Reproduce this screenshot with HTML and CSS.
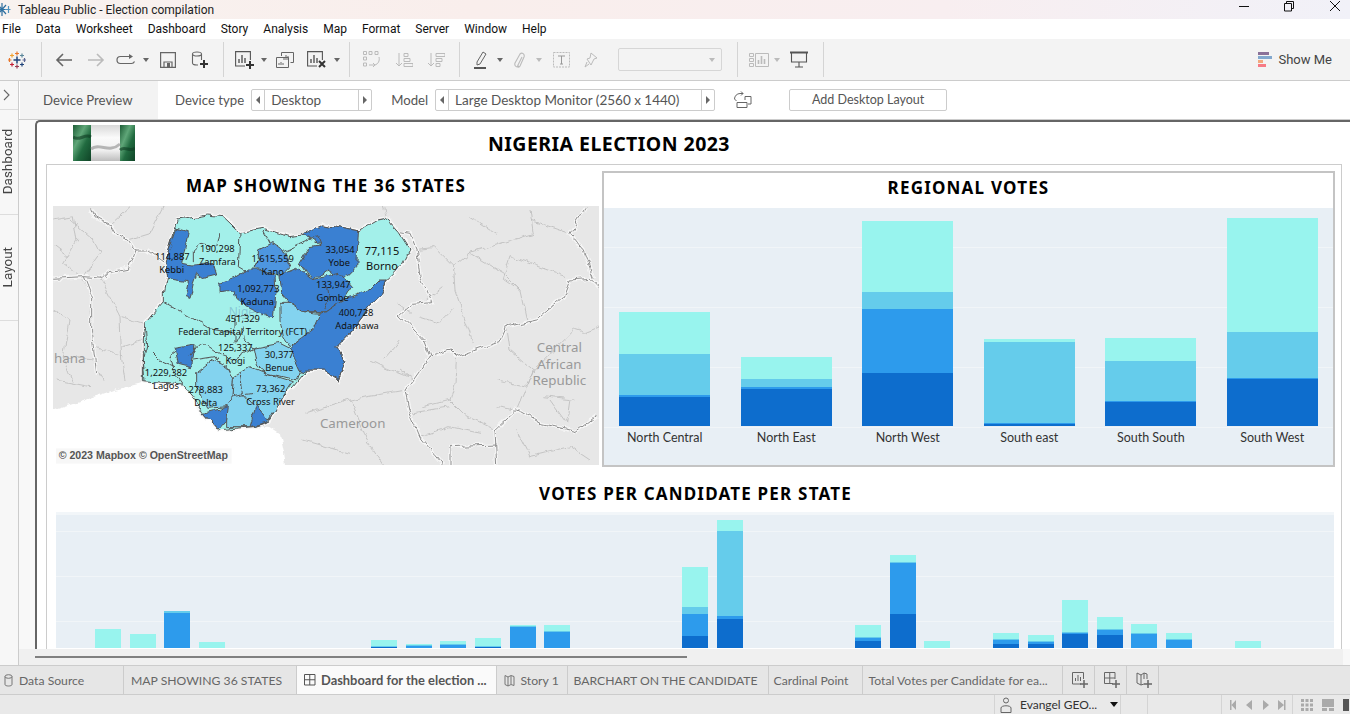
FILE: index.html
```html
<!DOCTYPE html>
<html lang="en">
<head>
<meta charset="utf-8">
<title>Tableau Public - Election compilation</title>
<link rel="stylesheet" href="styles.css">
</head>
<body>
<div class="app">
  <header class="titlebar">
    <svg class="title-logo" width="13" height="17" viewBox="0 0 13 17"><g stroke="#2f6f9f" stroke-width="1.2" fill="none"><path d="M4 2v13M-2 8.500h12M0 4l8 9M8 4l-8 9"/><path d="M10.500 5v7M7 8.500h5.500" stroke="#4f93bf"/></g></svg>
    <span class="title-text">Tableau Public - Election compilation</span>
    <div class="win-controls">
      <svg class="win-btn" width="46" height="12" viewBox="0 0 46 12"><path d="M21 6.500h10" stroke="#111" stroke-width="1"/></svg>
      <svg class="win-btn" width="46" height="12" viewBox="0 0 46 12"><path d="M20.500 3.500h7v7.500h-7zM22.500 3.500v-2h7v7h-2" fill="none" stroke="#111" stroke-width="1"/></svg>
      <svg class="win-btn" width="40" height="12" viewBox="0 0 40 12"><path d="M20 1l10 10M30 1L20 11" stroke="#111" stroke-width="1"/></svg>
    </div>
  </header>

  <nav class="menubar">
    <span>File</span><span>Data</span><span>Worksheet</span><span>Dashboard</span><span>Story</span><span>Analysis</span><span>Map</span><span>Format</span><span>Server</span><span>Window</span><span>Help</span>
  </nav>

  <div class="toolbar">
    <div class="slot w34"><svg width="18" height="18" viewBox="0 0 18 18" fill="none" stroke-width="1.2"><path d="M9 .5v4M7 2.500h4" stroke="#e8762c"/><path d="M4 2.500v4M2 4.500h4" stroke="#f0a030"/><path d="M14 2.500v4M12 4.500h4" stroke="#5b879b"/><path d="M1.500 7v4M0 9h3.500" stroke="#e8762c"/><path d="M9 5.500v7M5.500 9h7" stroke="#1f447b" stroke-width="1.5"/><path d="M16.500 7v4M14.500 9h3.500" stroke="#5b6591"/><path d="M4 11.500v4M2 13.500h4" stroke="#c72035"/><path d="M14 11.500v4M12 13.500h4" stroke="#1f447b"/><path d="M9 13.500v4M7 15.500h4" stroke="#9a3a50"/></svg></div>
    <div class="slot w14"><i class="tsep"></i></div>
    <div class="slot w32"><svg width="18" height="14" viewBox="0 0 18 14" fill="none" stroke="#666" stroke-width="1.6"><path d="M17 7H2M8 1L2 7l6 6"/></svg></div>
    <div class="slot w32"><svg width="18" height="14" viewBox="0 0 18 14" fill="none" stroke="#bbb" stroke-width="1.6"><path d="M1 7h15M10 1l6 6-6 6"/></svg></div>
    <div class="slot w28"><svg width="20" height="12" viewBox="0 0 20 12" fill="none" stroke="#666" stroke-width="1.2"><path d="M14 2.500H4.500a3.500 3.500 0 0 0 0 7h11a3.500 3.500 0 0 0 3-2"/><path d="M13 0l4 2.500-4 2.500z" fill="#666" stroke="none"/></svg></div>
    <div class="slot w12"><i class="caret"></i></div>
    <div class="slot w32"><svg width="16" height="16" viewBox="0 0 16 16" fill="none" stroke="#666" stroke-width="1.2"><path d="M.6.6h14.800v14.800H.6zM4 15V10h8v5"/><rect x="7" y="11" width="3" height="4" fill="#666" stroke="none"/></svg></div>
    <div class="slot w32"><svg width="18" height="18" viewBox="0 0 18 18" fill="none" stroke="#666" stroke-width="1.1"><ellipse cx="6" cy="3" rx="4.500" ry="2"/><path d="M1.500 3v9c0 1 2 2 4.500 2h1M10.500 3v6"/><path d="M13 9v8M9 13h8" stroke="#333" stroke-width="2"/></svg></div>
    <div class="slot w14"><i class="tsep"></i></div>
    <div class="slot w30"><svg width="20" height="18" viewBox="0 0 20 18" fill="none" stroke="#555" stroke-width="1.1"><path d="M10 15H.6V.6h14.800V9"/><path d="M4 12V8M7 12V4M10 12V7" stroke-width="1.4"/><path d="M15 10v8M11 14h8" stroke="#333" stroke-width="2"/></svg></div>
    <div class="slot w8"><i class="caret"></i></div>
    <div class="slot w34"><svg width="18" height="16" viewBox="0 0 18 16" fill="none" stroke="#666" stroke-width="1"><path d="M5.500 4V.5h12v10h-3M.5 5.500h12v10H.5z" /><path d="M8 8V5M10 8V3M12 8V4M3 13v-2M5 13v-3M7 13v-2" /></svg></div>
    <div class="slot w30"><svg width="20" height="18" viewBox="0 0 20 18" fill="none" stroke="#555" stroke-width="1.1"><path d="M10 15H.6V.6h14.800V9"/><path d="M4 12V8M7 12V4M10 12V7" stroke-width="1.4"/><path d="M12 10l6 6M18 10l-6 6" stroke="#333" stroke-width="2"/></svg></div>
    <div class="slot w10"><i class="caret"></i></div>
    <div class="slot w14"><i class="tsep"></i></div>
    <div class="slot w32"><svg width="18" height="17" viewBox="0 0 18 17" fill="none" stroke="#bbb" stroke-width="1"><path d="M.5.500h3v3h-3zM6 .5h3v3H6zM12 .5h3v3h-3zM.5 6h3v3h-3zM.5 12h3v3h-3zM6 14h5M16 6c1 4-1 7-4 8M10 12l2 2-2 2"/></svg></div>
    <div class="slot w32"><svg width="18" height="16" viewBox="0 0 18 16" fill="none" stroke="#bbb" stroke-width="1"><path d="M4 1v13M1 11l3 3 3-3M9 1.500h4v3H9zM9 6.500h6v3H9zM9 11.500h9v3H9z"/></svg></div>
    <div class="slot w32"><svg width="18" height="16" viewBox="0 0 18 16" fill="none" stroke="#bbb" stroke-width="1"><path d="M4 1v13M1 11l3 3 3-3M9 1.500h9v3H9zM9 6.500h6v3H9zM9 11.500h4v3H9z"/></svg></div>
    <div class="slot w14"><i class="tsep"></i></div>
    <div class="slot w28"><svg width="14" height="18" viewBox="0 0 14 18" fill="none" stroke="#666" stroke-width="1"><path d="M4 11l6-10 3 2-6 10-3 1z"/><path d="M1 17h12" stroke="#555" stroke-width="2"/></svg></div>
    <div class="slot w12"><i class="caret"></i></div>
    <div class="slot w26"><svg width="12" height="16" viewBox="0 0 12 16" fill="none" stroke="#bbb" stroke-width="1.1"><path d="M9 5l-4 8c-1 2 1 3 2 1l4-9c1-3-2-5-4-3L2 11c-1 3 2 5 4 3"/></svg></div>
    <div class="slot w14"><i class="caret light"></i></div>
    <div class="slot w32"><svg width="18" height="16" viewBox="0 0 18 16" fill="none" stroke="#bbb" stroke-width="1"><rect x=".5" y=".5" width="16" height="14.500" stroke-dasharray="2 1"/><path d="M5 4h7M8.500 4v8M7 12h3" stroke="#999"/></svg></div>
    <div class="slot w26"><svg width="14" height="16" viewBox="0 0 14 16" fill="none" stroke="#bbb" stroke-width="1"><path d="M7 1l6 5-3 1-2 4-1 2-4-6 3-1zM3 10l-2 5 4-3"/></svg></div>
    <div class="tb-select"><i class="caret light"></i></div>
    <div class="slot w8"></div>
    <div class="slot w14"><i class="tsep"></i></div>
    <div class="slot w30"><svg width="20" height="14" viewBox="0 0 20 14" fill="none" stroke="#bbb" stroke-width="1"><path d="M.5.500h4v3h-4zM.5 5.500h4v3h-4zM.5 10.500h4v3h-4zM6.500.500h13v13h-13z"/><path d="M9.500 11V7M12.500 11V3M15.500 11V6" stroke-width="1.600"/></svg></div>
    <div class="slot w6"><i class="caret light"></i></div>
    <div class="slot w37"><svg width="18" height="17" viewBox="0 0 18 17" fill="none" stroke="#555" stroke-width="1.1"><path d="M0 1.500h18" stroke-width="2"/><path d="M1.500 2v9h15V2M9 11v5M5 16h8"/></svg></div>
    <div class="slot w13"><i class="tsep"></i></div>
    <div class="showme">
      <svg width="15" height="16" viewBox="0 0 15 16"><rect width="11" height="3" fill="#8a7198"/><rect y="4" width="14" height="3" fill="#82a8ce"/><rect y="8" width="5" height="3" fill="#f2a97e"/><rect y="12" width="8" height="3" fill="#f77b85"/></svg>
      <span>Show Me</span>
    </div>
  </div>

  <div class="main">
    <aside class="rail">
      <div class="rail-top"><svg width="8" height="12" viewBox="0 0 8 12" fill="none" stroke="#666" stroke-width="1.1"><path d="M1 1l5 5-5 5"/></svg></div>
      <div class="rail-item dash-tab"><span>Dashboard</span></div>
      <div class="rail-item layout-tab"><span>Layout</span></div>
    </aside>

    <div class="content">
      <div class="devicebar">
        <div class="dp-tab">Device Preview</div>
        <span class="dlabel first">Device type</span>
        <div class="stepper type-step"><i class="arrow left"></i><span>Desktop</span><i class="arrow right"></i></div>
        <span class="dlabel second">Model</span>
        <div class="stepper model-step"><i class="arrow left"></i><span>Large Desktop Monitor (2560 x 1440)</span><i class="arrow right"></i></div>
        <svg class="rotate" width="19" height="18" viewBox="0 0 19 18" fill="none" stroke="#666" stroke-width="1"><path d="M4 11.500h10v5H4zM12 9V5.500h6V13h-3"/><path d="M10 2.500H7C4 2.500 1.500 5 1.500 8l2 2M8 .5l2 2-2 2"/></svg>
        <div class="add-layout">Add Desktop Layout</div>
      </div>

      <div class="stage">
        <div class="dashboard">
          <div class="dash-head">
            <svg class="flag" width="62" height="36" viewBox="0 0 62 36" preserveAspectRatio="none">
              <defs>
                <linearGradient id="flagG" x1="0" y1="0" x2="1" y2="1"><stop offset="0" stop-color="#1d5c36"/><stop offset=".35" stop-color="#5fa678"/><stop offset=".6" stop-color="#216b40"/><stop offset="1" stop-color="#0f4326"/></linearGradient>
                <linearGradient id="flagW" x1="0" y1="0" x2="0" y2="1"><stop offset="0" stop-color="#d8d8d8"/><stop offset=".35" stop-color="#fafafa"/><stop offset=".7" stop-color="#f0f0f0"/><stop offset="1" stop-color="#bdbdbd"/></linearGradient>
              </defs>
              <rect width="18" height="36" fill="url(#flagG)"/><rect x="18" width="29" height="36" fill="url(#flagW)"/><rect x="47" width="15" height="36" fill="url(#flagG)"/>
              <path d="M18 24c9-7 18 5 29-5" fill="none" stroke="#8c8c8c" stroke-width="3" opacity=".6"/>
              <path d="M0 12c6 5 12-4 18 0M47 25c5-5 10 3 15-2" fill="none" stroke="#0d3b21" stroke-width="3" opacity=".6"/>
            </svg>
            <h1>NIGERIA ELECTION 2023</h1>
          </div>
          <div class="frame">
            <div class="top-row">
              <section class="map-panel">
                <h2>MAP SHOWING THE 36 STATES</h2>
                <svg class="map" width="546" height="259" viewBox="9 18 1638 777">
                  <defs>
                    <filter id="rough" x="-5%" y="-5%" width="110%" height="110%" color-interpolation-filters="sRGB">
                      <feTurbulence type="fractalNoise" baseFrequency=".03" numOctaves="3" seed="4" result="n"/>
                      <feDisplacementMap in="SourceGraphic" in2="n" scale="20" xChannelSelector="R" yChannelSelector="G"/>
                    </filter>
                  </defs>
                  <rect x="9" y="18" width="1638" height="777" fill="#e7e7e7"/>
                  <g filter="url(#rough)">
                    <g fill="none" stroke="#bdbdbd" stroke-width="2.500">
                      <path d="M10 60L70 50 80 120 40 190 90 230M155 240L210 350 215 480 225 540M95 235L125 295 120 340 130 400 135 500 165 545M10 330L60 360 40 470 70 545M180 75L240 20M235 120L300 100 340 20M60 60L130 120 150 160 100 230M10 140L50 170M215 350L280 370M220 440L280 420M135 440L220 470M40 470L130 480M20 540L120 560M1050 150L1150 140 1210 200 1260 160 1450 100 1440 30M1210 200L1215 270 1260 400 1270 430M1220 470L1215 550 1200 600M1120 620L1200 600 1240 640 1340 690M1370 380L1380 450 1450 510 1400 630M1450 510L1570 390 1600 400 1650 380M1500 600L1550 670 1560 600M1260 160L1360 220 1410 270 1430 360M1410 270L1360 235 1380 170 1550 230M1000 20L1010 55M1040 310L1080 340M960 480L1000 500 1075 530M770 640L900 600 1065 570M900 600L940 700 1000 795M760 720L900 760M1110 350L1170 370 1210 330M1130 300L1180 260M1080 640L1200 620M1110 710L1200 680 1290 700M1340 540L1430 560 1450 510M1340 620L1400 630M1480 590L1570 600M1400 690L1440 770 1560 740 1620 780M1050 420L1000 480M1050 510L1090 540M1560 100L1440 60M1260 50L1340 100"/>
                    </g>
                    <path id="b1halo" class="map-halo" d="M125 25L135 50 180 75 195 100 235 120 255 150 235 205 180 215 160 235 100 230 10 235M100 230L125 295 125 400 140 520M255 150L290 150 345 190M1050 95L1080 100 1100 150 1110 230 1145 305 1090 310 1050 345 1120 420 1140 470 1200 450 1220 470 1350 425 1370 380 1460 360 1540 290 1560 240 1620 235 1645 260M1140 470L1090 540 1065 570 1080 640 1110 710 1180 795M1605 25L1560 100 1600 150 1630 235M1340 795L1335 690 1400 630 1470 670 1580 695 1640 650M1200 795L1200 740 1340 735"/>
                    <path class="map-border" d="M125 25L135 50 180 75 195 100 235 120 255 150 235 205 180 215 160 235 100 230 10 235M100 230L125 295 125 400 140 520M255 150L290 150 345 190M1050 95L1080 100 1100 150 1110 230 1145 305 1090 310 1050 345 1120 420 1140 470 1200 450 1220 470 1350 425 1370 380 1460 360 1540 290 1560 240 1620 235 1645 260M1140 470L1090 540 1065 570 1080 640 1110 710 1180 795M1605 25L1560 100 1600 150 1630 235M1340 795L1335 690 1400 630 1470 670 1580 695 1640 650M1200 795L1200 740 1340 735"/>
                    <polygon class="sea" points="-30,642 100,600 190,570 280,548 400,555 430,590 460,640 505,690 610,680 660,680 690,700 700,750 715,830 -30,830"/>
                    <polygon class="halo" points="385,60 470,45 520,50 570,98 640,85 720,110 760,105 820,75 925,95 985,60 1010,55 1045,95 1080,150 1060,190 1010,240 990,290 960,320 900,400 860,440 885,480 865,540 820,510 770,510 730,560 700,590 655,665 610,680 505,690 460,640 430,590 400,555 280,545 280,420 285,370 340,305 340,280 350,230 345,190 375,90"/>
                    <polygon class="st s1" points="385,60 470,45 520,50 570,98 640,85 720,110 760,105 820,75 925,95 985,60 1010,55 1045,95 1080,150 1060,190 1010,240 990,290 960,320 900,400 860,440 885,480 865,540 820,510 770,510 730,560 700,590 655,665 610,680 505,690 460,640 430,590 400,555 280,545 280,420 285,370 340,305 340,280 350,230 345,190 375,90"/>
                    <polygon class="st s4" points="380,85 415,95 395,190 430,195 490,190 500,225 460,235 440,220 430,250 420,295 405,290 415,245 350,235 345,185"/>
                    <polygon class="st s3" points="625,150 665,130 700,155 720,200 695,225 640,210 612,205 625,180"/>
                    <polygon class="st s4" points="510,275 510,250 550,235 590,210 640,210 675,225 678,280 670,350 640,345 590,320 560,295 555,270"/>
                    <polygon class="st s4" points="760,100 820,75 925,95 920,200 880,240 830,210 800,230 790,240 750,190 780,140 810,135"/>
                    <polygon class="st s4" points="690,225 740,205 790,240 810,230 870,220 905,260 880,300 830,335 760,335 720,310 695,280"/>
                    <polygon class="st s4" points="880,300 905,290 960,270 990,240 1010,240 990,290 960,320 900,400 860,440 885,480 865,540 820,510 770,510 750,520 720,450 800,340 830,335"/>
                    <polygon class="st s2" points="690,310 720,310 760,335 810,340 790,385 720,440 700,410 690,360"/>
                    <polygon class="st s2" points="610,445 690,430 720,445 750,510 740,540 700,530 650,520 620,495"/>
                    <polygon class="st s2" points="550,530 600,500 650,520 730,545 700,590 655,665 610,680 530,680 530,620 545,600"/>
                    <polygon class="st s2" points="440,520 490,480 530,500 550,540 545,600 530,620 470,625 440,560"/>
                    <polygon class="st s4" points="460,640 535,620 530,660 505,690"/>
                    <polygon class="st s4" points="620,615 655,665 600,680"/>
                    <polygon class="st s4" points="375,445 435,435 425,500 385,490"/>
                    <path class="st-line" d="M570 98L565 200 590 215M510 95L500 140 450 130 430 150 430 185M640 90L660 130M700 155L800 110 810 135M750 190L780 235M340 305L420 350 475 385 555 400 555 430 580 380M285 370L290 440 280 480 285 545M460 430L510 465 550 480 620 440M380 450L360 465 375 520 400 555M420 470L440 440 460 430M430 480L495 470 500 480M555 385L555 350 590 345M580 410L610 445M290 440L330 480 375 500M570 520L580 580 610 615M550 590L610 580M820 330L835 300 830 260"/>
                  </g>
                  <text class="bg-label" x="12" y="490">hana</text>
                  <text class="bg-label" x="908" y="684" text-anchor="middle">Cameroon</text>
                  <text class="bg-label" x="1528" y="456" text-anchor="middle">Central</text>
                  <text class="bg-label" x="1528" y="506" text-anchor="middle">African</text>
                  <text class="bg-label" x="1528" y="556" text-anchor="middle">Republic</text>
                  <text class="faint" x="598" y="348" text-anchor="middle">Nigeria</text>
                  <g class="labels" text-anchor="middle">
                    <text x="367" y="180">114,887</text><text x="365" y="218">Kebbi</text>
                    <text x="502" y="156">190,298</text><text x="502" y="196">Zamfara</text>
                    <text x="668" y="186">1,615,559</text><text x="668" y="224">Kano</text>
                    <text x="870" y="159">33,054</text><text x="868" y="198">Yobe</text>
                    <text class="lg" x="996" y="164">77,115</text><text class="lg" x="996" y="209">Borno</text>
                    <text x="625" y="276">1,092,773</text><text x="622" y="315">Kaduna</text>
                    <text x="850" y="264">133,947</text><text x="848" y="303">Gombe</text>
                    <text x="918" y="348">400,728</text><text x="921" y="387">Adamawa</text>
                    <text x="578" y="366">451,329</text><text x="578" y="405">Federal Capital Territory (FCT)</text>
                    <text x="556" y="452">125,337</text><text x="556" y="492">Kogi</text>
                    <text x="688" y="474">30,377</text><text x="688" y="513">Benue</text>
                    <text x="348" y="527">1,229,382</text><text x="348" y="567">Lagos</text>
                    <text x="467" y="579">278,883</text><text x="467" y="617">Delta</text>
                    <text x="662" y="576">73,362</text><text x="662" y="615">Cross River</text>
                  </g>
                  <rect x="18" y="745" width="527" height="46" fill="#f2f2f2" opacity=".6"/>
                  <text class="credit" x="26" y="778">© 2023 Mapbox © OpenStreetMap</text>
                </svg>
              </section>
              <section class="region-panel">
                <h2>REGIONAL VOTES</h2>
                <div class="region-chart">
                  <div class="rcol"><div class="stack"><b class="c1" style="height:42px"></b><b class="c2" style="height:41px"></b><b class="c3" style="height:2px"></b><b class="c4" style="height:29px"></b></div><span>North Central</span></div>
                  <div class="rcol"><div class="stack"><b class="c1" style="height:22px"></b><b class="c2" style="height:8px"></b><b class="c3" style="height:2px"></b><b class="c4" style="height:37px"></b></div><span>North East</span></div>
                  <div class="rcol"><div class="stack"><b class="c1" style="height:71px"></b><b class="c2" style="height:17px"></b><b class="c3" style="height:64px"></b><b class="c4" style="height:53px"></b></div><span>North West</span></div>
                  <div class="rcol"><div class="stack"><b class="c1" style="height:3px"></b><b class="c2" style="height:81px"></b><b class="c3" style="height:1px"></b><b class="c4" style="height:2px"></b></div><span>South east</span></div>
                  <div class="rcol"><div class="stack"><b class="c1" style="height:23px"></b><b class="c2" style="height:40px"></b><b class="c3" style="height:1px"></b><b class="c4" style="height:24px"></b></div><span>South South</span></div>
                  <div class="rcol"><div class="stack"><b class="c1" style="height:114px"></b><b class="c2" style="height:46px"></b><b class="c3" style="height:1px"></b><b class="c4" style="height:47px"></b></div><span>South West</span></div>
                </div>
              </section>
            </div>
            <section class="state-panel">
              <h2>VOTES PER CANDIDATE PER STATE</h2>
              <div class="state-chart">
                <div class="sbar"><b class="c1" style="height:19px"></b></div>
                <div class="sbar"><b class="c1" style="height:14px"></b></div>
                <div class="sbar"><b class="c2" style="height:2px"></b><b class="c3" style="height:35px"></b></div>
                <div class="sbar"><b class="c1" style="height:6px"></b></div>
                <div class="sbar"></div><div class="sbar"></div><div class="sbar"></div><div class="sbar"></div>
                <div class="sbar"><b class="c1" style="height:6px"></b><b class="c2" style="height:1px"></b><b class="c4" style="height:1px"></b></div>
                <div class="sbar"><b class="c1" style="height:1px"></b><b class="c2" style="height:1px"></b><b class="c3" style="height:2px"></b></div>
                <div class="sbar"><b class="c1" style="height:3px"></b><b class="c2" style="height:1px"></b><b class="c3" style="height:3px"></b></div>
                <div class="sbar"><b class="c1" style="height:8px"></b><b class="c2" style="height:1px"></b><b class="c4" style="height:1px"></b></div>
                <div class="sbar"><b class="c1" style="height:1px"></b><b class="c2" style="height:1px"></b><b class="c3" style="height:21px"></b></div>
                <div class="sbar"><b class="c1" style="height:6px"></b><b class="c2" style="height:1px"></b><b class="c3" style="height:16px"></b></div>
                <div class="sbar"></div><div class="sbar"></div><div class="sbar"></div>
                <div class="sbar"><b class="c1" style="height:40px"></b><b class="c2" style="height:7px"></b><b class="c3" style="height:22px"></b><b class="c4" style="height:12px"></b></div>
                <div class="sbar"><b class="c1" style="height:11px"></b><b class="c2" style="height:85px"></b><b class="c3" style="height:3px"></b><b class="c4" style="height:29px"></b></div>
                <div class="sbar"></div><div class="sbar"></div><div class="sbar"></div>
                <div class="sbar"><b class="c1" style="height:12px"></b><b class="c2" style="height:1px"></b><b class="c3" style="height:3px"></b><b class="c4" style="height:7px"></b></div>
                <div class="sbar"><b class="c1" style="height:7px"></b><b class="c2" style="height:1px"></b><b class="c3" style="height:51px"></b><b class="c4" style="height:34px"></b></div>
                <div class="sbar"><b class="c1" style="height:7px"></b></div>
                <div class="sbar"></div>
                <div class="sbar"><b class="c1" style="height:6px"></b><b class="c2" style="height:1px"></b><b class="c3" style="height:4px"></b><b class="c4" style="height:4px"></b></div>
                <div class="sbar"><b class="c1" style="height:6px"></b><b class="c2" style="height:1px"></b><b class="c3" style="height:2px"></b><b class="c4" style="height:4px"></b></div>
                <div class="sbar"><b class="c1" style="height:32px"></b><b class="c2" style="height:1px"></b><b class="c3" style="height:1px"></b><b class="c4" style="height:14px"></b></div>
                <div class="sbar"><b class="c1" style="height:12px"></b><b class="c2" style="height:1px"></b><b class="c3" style="height:5px"></b><b class="c4" style="height:13px"></b></div>
                <div class="sbar"><b class="c1" style="height:9px"></b><b class="c2" style="height:1px"></b><b class="c3" style="height:14px"></b></div>
                <div class="sbar"><b class="c1" style="height:6px"></b><b class="c2" style="height:1px"></b><b class="c3" style="height:8px"></b></div>
                <div class="sbar"></div>
                <div class="sbar"><b class="c1" style="height:7px"></b></div>
              </div>
            </section>
          </div>
        </div>
        <div class="hscroll"><i class="thumb"></i></div>
      </div>
    </div>
  </div>

  <div class="tabs">
    <div class="tab t-source"><svg width="9" height="13" viewBox="0 0 9 13" fill="none" stroke="#777"><ellipse cx="4.500" cy="2.500" rx="3.500" ry="1.800"/><path d="M1 2.500v8c0 2 7 2 7 0v-8"/></svg><span>Data Source</span></div>
    <div class="tab t-map"><span>MAP SHOWING 36 STATES</span></div>
    <div class="tab t-dash active"><svg width="12" height="12" viewBox="0 0 12 12" fill="none" stroke="#555"><path d="M.5.500h10.500v10.500H.5zM5.750.5v10.500M.5 5.750h10.500"/></svg><span>Dashboard for the election ...</span></div>
    <div class="tab t-story"><svg width="11" height="13" viewBox="0 0 11 13" fill="none" stroke="#777"><path d="M1 1.500l3 1.500 3-1.500 3 1v9l-3-1-3 1.500-3-1.500zM4 3v9M7 2v8"/></svg><span>Story 1</span></div>
    <div class="tab t-bar"><span>BARCHART ON THE CANDIDATE</span></div>
    <div class="tab t-card"><span>Cardinal Point</span></div>
    <div class="tab t-total"><span>Total Votes per Candidate for ea...</span></div>
    <div class="tab t-icon"><svg width="16" height="16" viewBox="0 0 16 16" fill="none" stroke="#666"><path d="M9 12H.5V.500h11V7"/><path d="M3.500 9V6M6 9V3M8.500 9V5" /><path d="M12 8v8M8 12h8" stroke-width="1.500"/></svg></div>
    <div class="tab t-icon"><svg width="16" height="16" viewBox="0 0 16 16" fill="none" stroke="#666"><path d="M9 11.500H.5V.500h10.500V7M5.750.5v11M.5 6h10.500"/><path d="M12 8v8M8 12h8" stroke-width="1.500"/></svg></div>
    <div class="tab t-icon"><svg width="16" height="16" viewBox="0 0 16 16" fill="none" stroke="#666"><path d="M8 12l-3 1-4-2V1l4 2 3-2 3 1v5M5 3v10M8 1v6"/><path d="M12 8v8M8 12h8" stroke-width="1.500"/></svg></div>
  </div>

  <footer class="status">
    <div class="st-cell user"><svg width="12" height="16" viewBox="0 0 12 16" fill="none" stroke="#666"><circle cx="6" cy="3.500" r="2.500"/><path d="M1 15.500V11c0-3 10-3 10 0v4.500z"/></svg><span>Evangel GEO...</span><i class="caret dark"></i></div>
    <div class="st-cell w27"></div>
    <div class="st-cell w27"></div>
    <div class="st-cell nav">
      <svg width="62" height="10" viewBox="0 0 62 10" fill="#aaa"><path d="M1 0h1.500v10H1zM7 0v10L2.500 5zM23 0v10l-6-5zM34 0l6 5-6 5zM49 0l6 5-6 5zM55 0h1.500v10H55z"/></svg>
    </div>
    <div class="st-cell views">
      <svg width="12" height="12" viewBox="0 0 12 12" fill="#aaa"><path d="M0 0h3v3H0zM4.500 0h3v3h-3zM9 0h3v3H9zM0 4.500h3v3H0zM4.500 4.500h3v3h-3zM9 4.500h3v3H9zM0 9h3v3H0zM4.500 9h3v3h-3zM9 9h3v3H9z"/></svg>
      <svg width="12" height="12" viewBox="0 0 12 12" fill="#aaa"><path d="M0 0h12v8H0zM0 9h5v3H0zM7 9h5v3H7z"/></svg>
      <i class="view-dark"></i>
    </div>
  </footer>
</div>
</body>
</html>
```
FILE: styles.css
```css
* { box-sizing: border-box; }
html, body { margin: 0; padding: 0; height: 100%; overflow: hidden; background: #fff; }
body { font-family: "Lato", "Noto Sans", sans-serif; color: #555; }
h1, h2 { margin: 0; font-family: "Noto Sans", sans-serif; font-weight: 700; color: #000; text-align: center; white-space: nowrap; }

.app { width: 1350px; height: 714px; display: flex; flex-direction: column; overflow: hidden; }

/* title bar */
.titlebar { height: 19px; flex: none; display: flex; align-items: center; background: linear-gradient(90deg, #f8f2ef 0%, #f9eeec 35%, #f8eef0 70%, #f1f1f8 100%); overflow: hidden; }
.title-logo { flex: none; margin-left: -2px; }
.title-text { margin-left: 7px; font: 12px "Roboto", sans-serif; color: #222; }
.win-controls { margin-left: auto; align-self: flex-start; display: flex; }
.win-btn { display: block; }

/* menu */
.menubar { height: 20px; flex: none; display: flex; align-items: center; gap: 15px; padding-left: 2px; background: #fff; font: 12px "Roboto", sans-serif; color: #111; }

/* toolbar */
.toolbar { height: 42px; flex: none; display: flex; align-items: center; background: #f3f3f3; border-bottom: 1px solid #ccc; }
.slot { flex: none; height: 35px; display: flex; align-items: center; justify-content: center; }
.w6 { width: 6px; } .w8 { width: 8px; } .w10 { width: 10px; } .w12 { width: 12px; } .w13 { width: 13px; }
.w14 { width: 14px; } .w26 { width: 26px; } .w28 { width: 28px; } .w30 { width: 30px; } .w32 { width: 32px; }
.w34 { width: 34px; } .w37 { width: 37px; }
.tsep { display: block; width: 1px; height: 35px; background: #d4d4d4; }
.caret { display: block; width: 0; height: 0; border: 3px solid transparent; border-top: 4px solid #666; border-bottom: 0; }
.caret.light { border-top-color: #bbb; }
.caret.dark { border: 4px solid transparent; border-top: 5px solid #111; border-bottom: 0; }
.tb-select { flex: none; margin-left: 14px; width: 104px; height: 23px; border: 1px solid #d6d6d6; border-radius: 2px; display: flex; align-items: center; justify-content: flex-end; padding-right: 6px; }
.showme { margin-left: auto; padding-right: 18px; display: flex; align-items: center; gap: 5px; font: 13px "Roboto", sans-serif; color: #444; }
.showme svg { display: block; }

/* main */
.main { height: 584px; flex: none; display: flex; }
.rail { width: 19px; flex: none; background: #f7f7f7; border-right: 1px solid #ccc; display: flex; flex-direction: column; }
.rail-top { height: 29px; display: flex; align-items: center; justify-content: center; border-bottom: 1px solid #ddd; padding-right: 5px; }
.rail-item { border-bottom: 1px solid #ddd; display: flex; align-items: center; justify-content: center; padding-right: 5px; }
.rail-item span { writing-mode: vertical-rl; transform: rotate(180deg); font: 13.500px "Roboto", sans-serif; color: #444; }
.dash-tab { height: 105px; }
.layout-tab { height: 106px; }

.content { flex: 1; min-width: 0; display: flex; flex-direction: column; }
.devicebar { height: 39px; flex: none; display: flex; align-items: center; border-bottom: 1px solid #ccc; background: #fff; font-size: 13.200px; color: #555; }
.dp-tab { width: 138px; height: 38px; margin-left: 1px; background: #f3f3f3; display: flex; align-items: center; padding-left: 23px; white-space: nowrap; }
.dlabel { white-space: nowrap; }
.dlabel.first { margin-left: 17px; }
.dlabel.second { margin-left: 19px; }
.stepper { height: 22px; border: 1px solid #ccc; border-radius: 2px; display: flex; align-items: center; color: #555; }
.stepper span { flex: 1; height: 100%; border-left: 1px solid #ccc; border-right: 1px solid #ccc; padding-left: 6px; line-height: 20px; white-space: nowrap; font-size: 13.500px; }
.type-step { width: 121px; margin-left: 7px; }
.model-step { width: 280px; margin-left: 7px; }
.arrow { flex: none; width: 12px; height: 8px; display: flex; justify-content: center; }
.arrow::before { content: ""; display: block; border: 4px solid transparent; }
.arrow.left::before { border-right: 4px solid #666; border-left: 0; }
.arrow.right::before { border-left: 4px solid #666; border-right: 0; }
.rotate { flex: none; margin-left: 18px; }
.add-layout { margin-left: 37px; width: 158px; height: 22px; border: 1px solid #ccc; border-radius: 2px; text-align: center; line-height: 20px; font-size: 12.500px; color: #555; }

/* stage */
.stage { flex: 1; min-height: 0; display: flex; flex-direction: column; background: #f8f8f8; }
.dashboard { height: 529px; flex: none; margin-left: 16px; background: #fff; border-top: 2px solid #666; border-left: 2px solid #666; border-top-left-radius: 5px; overflow: hidden; }
.dash-head { height: 42px; display: flex; align-items: flex-start; }
.flag { flex: none; display: block; margin: 3px 0 0 36px; }
h1 { width: 948px; font-size: 19.500px; letter-spacing: .45px; line-height: 24px; margin-top: 10px; }
.frame { margin-left: 9px; width: 1296px; height: 486px; border: 1px solid #ccc; border-bottom: 0; }
.top-row { display: flex; height: 302px; }
.map-panel { width: 555px; flex: none; padding-left: 6px; }
.map-panel h2 { width: 546px; height: 41px; font-size: 17px; letter-spacing: 1.200px; line-height: 41px; }
.map { display: block; }
.region-panel { width: 733px; flex: none; margin-top: 6px; border: 2px solid #c4c4c4; }
.region-panel h2 { height: 35px; font-size: 17px; letter-spacing: 1.200px; line-height: 29px; }
.region-chart { height: 257px; display: grid; grid-template-columns: repeat(6, 1fr); background-color: #e8eff5; background-image: linear-gradient(to bottom, transparent 59px, #f1f5f8 59px); background-size: 100% 60px; background-position: 0 -20px; }
.rcol { display: flex; flex-direction: column; align-items: center; justify-content: flex-end; }
.rcol span { height: 39px; padding-top: 3px; line-height: 18px; font-size: 12.500px; color: #333; white-space: nowrap; }
.stack { width: 91px; display: flex; flex-direction: column; }
.stack b, .sbar b { display: block; flex: none; }
.c1 { background: #98f4ee; } .c2 { background: #65cceb; } .c3 { background: #2d9bec; } .c4 { background: #0d6dcd; }

.state-panel { padding: 17px 0 0 9px; }
.state-panel h2 { height: 20px; font-size: 17px; letter-spacing: 1.200px; line-height: 20px; width: 1279px; }
.state-chart { margin-top: 8px; width: 1278px; height: 136px; padding-left: 39px; display: flex; align-items: flex-end; background-color: #e8eff5; border-top: 3px solid #f2f6f9; background-image: linear-gradient(to bottom, transparent 44px, #f1f5f8 44px); background-size: 100% 45px; background-position: 0 -28px; }
.sbar { flex: 0 0 34.550px; display: flex; flex-direction: column; justify-content: flex-end; }
.sbar b { width: 26px; }

.hscroll { height: 16px; flex: none; background: #f0f0f0; margin-right: 7px; padding-top: 7px; padding-left: 16px; }
.thumb { display: block; width: 652px; height: 2px; background: #808080; }

/* map */
.map-border { fill: none; stroke: #8e8e8e; stroke-width: 3; }
.map-halo { fill: none; stroke: #f6f6f6; stroke-width: 11; }
.sea { fill: #fff; }
.halo { fill: none; stroke: #f6f6f6; stroke-width: 12; }
.st { stroke: #555; stroke-width: 3; stroke-linejoin: round; }
.s1 { fill: #a3f0ea; } .s2 { fill: #83d3ef; } .s3 { fill: #4d96e0; } .s4 { fill: #3a80d2; }
.st-line { fill: none; stroke: #555; stroke-width: 3; }
.bg-label { font: 40px "Noto Sans", sans-serif; fill: #999; }
.faint { font: 36px "Noto Sans", sans-serif; fill: rgba(80, 120, 170, .35); }
.labels text { font: 28px "Noto Sans", sans-serif; fill: #111; }
.labels text.lg { font-size: 33px; }
.credit { font: 600 31.800px "Liberation Sans", sans-serif; fill: #555; }

/* tabs */
.tabs { height: 30px; flex: none; display: flex; background: #e6e6e6; border-top: 1px solid #ccc; border-bottom: 1px solid #ccc; font-size: 12.200px; color: #666; }
.tab { flex: none; display: flex; align-items: center; gap: 6px; border-right: 1px solid #ccc; padding-left: 7px; white-space: nowrap; }
.tab svg { display: block; flex: none; }
.t-source { width: 124px; padding-left: 4px; }
.t-map { width: 173px; }
.t-dash { width: 199.500px; }
.t-dash.active { background: #fafafa; font-size: 12.900px; font-weight: 700; color: #555; gap: 5px; }
.t-story { width: 71px; padding-left: 7px; }
.t-bar { width: 201px; padding-left: 6px; }
.t-card { width: 94px; padding-left: 5px; }
.t-total { width: 200px; padding-left: 6px; }
.t-icon { width: 32px; padding-left: 9px; }

/* status */
.status { flex: 1; display: flex; justify-content: flex-end; align-items: stretch; background: #e9e9e9; font-size: 12px; color: #333; overflow: hidden; }
.st-cell { flex: none; border-left: 1px solid #d4d4d4; display: flex; align-items: center; }
.user { width: 126px; padding-left: 5px; }
.user span { margin-left: 8px; white-space: nowrap; }
.user .caret { margin-left: 13px; }
.w27 { width: 27px; }
.nav { width: 71px; padding-left: 7px; margin-left: 47px; }
.views { width: 58px; padding-left: 8px; gap: 9px; }
.view-dark { display: block; width: 6px; height: 12px; background: #555; }
```
